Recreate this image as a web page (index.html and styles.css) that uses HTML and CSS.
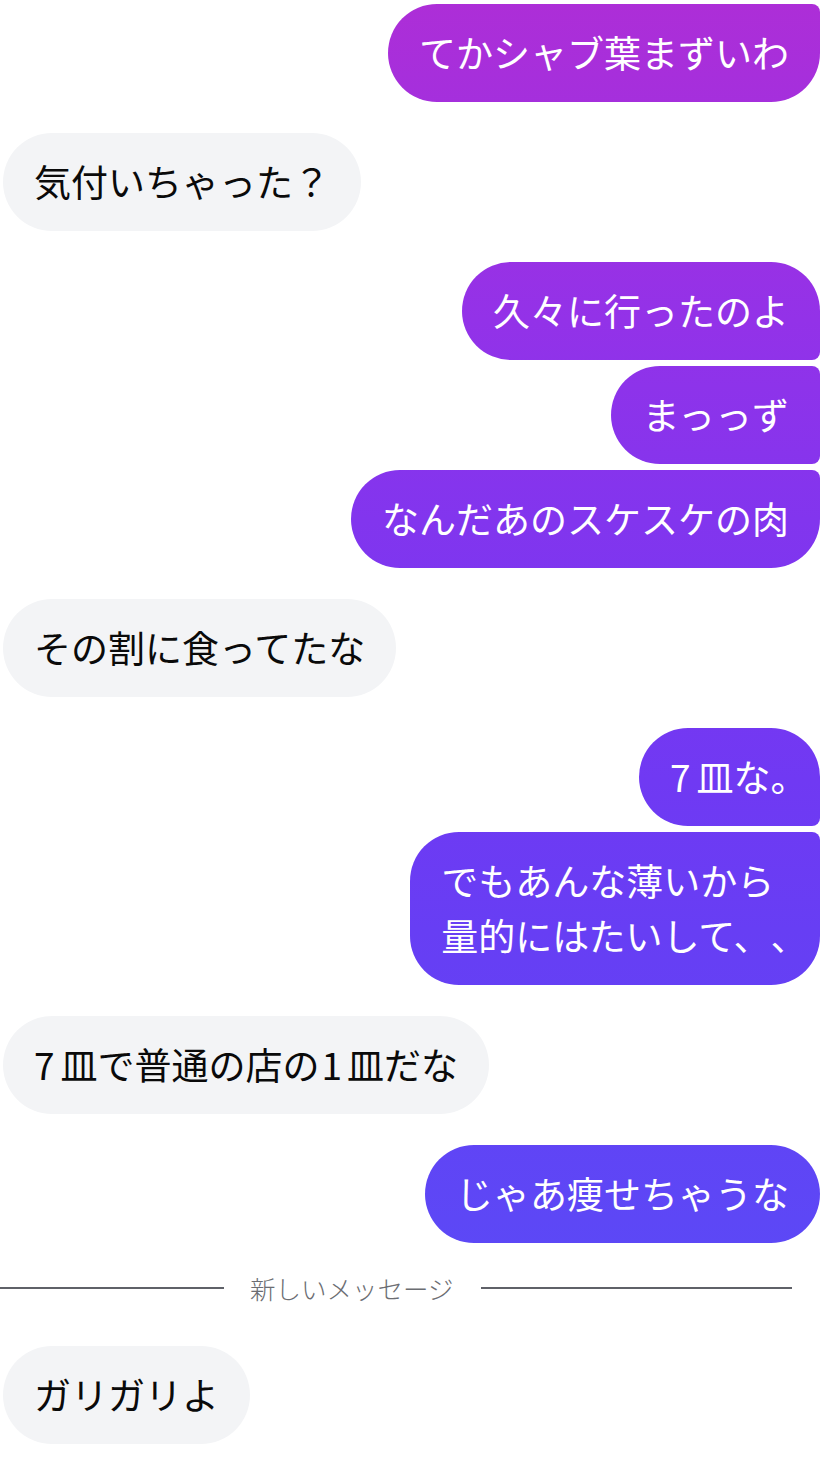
FILE: index.html
```html
<!DOCTYPE html>
<html lang="ja">
<head>
<meta charset="utf-8">
<link rel="stylesheet" href="styles.css">
</head>
<body>
<main class="chat">
  <div class="group out">
    <div class="bubble out mid-top">てかシャブ葉まずいわ</div>
  </div>
  <div class="group in">
    <div class="bubble in">気付いちゃった？</div>
  </div>
  <div class="group out">
    <div class="bubble out first">久々に行ったのよ</div>
    <div class="bubble out middle">まっっず</div>
    <div class="bubble out last">なんだあのスケスケの肉</div>
  </div>
  <div class="group in">
    <div class="bubble in">その割に食ってたな</div>
  </div>
  <div class="group out">
    <div class="bubble out first"><span class="num">7</span>皿な<span class="half">。</span></div>
    <div class="bubble out last">でもあんな薄いから<br>量的にはたいして、<span class="half">、</span></div>
  </div>
  <div class="group in">
    <div class="bubble in"><span class="num">7</span>皿で普通の店の<span class="num mid">1</span>皿だな</div>
  </div>
  <div class="group out">
    <div class="bubble out">じゃあ痩せちゃうな</div>
  </div>
  <div class="divider">
    <span class="line"></span>
    <span class="divider-text">新しいメッセージ</span>
    <span class="line right"></span>
  </div>
  <div class="group in">
    <div class="bubble in">ガリガリよ</div>
  </div>
</main>
</body>
</html>
```

FILE: styles.css
```css
html, body {
  margin: 0;
  padding: 0;
  background: #ffffff;
}

body {
  font-family: "Noto Sans CJK JP", "Noto Sans", sans-serif;
  width: 840px;
  text-spacing-trim: space-all;
}

.chat {
  display: flex;
  flex-direction: column;
  gap: 31px;
  padding: 4px 20px 0 3px;
}

.group {
  display: flex;
  flex-direction: column;
  gap: 6px;
}

.group.out {
  align-items: flex-end;
}

.group.in {
  align-items: flex-start;
}

.bubble {
  font-size: 37px;
  line-height: 55px;
  padding: 21px 31px 22px 31px;
  border-radius: 49px;
  white-space: nowrap;
  text-spacing-trim: space-all;
}

.num {
  margin: 0 6px 0 0;
}

.num.mid {
  margin: 0 5px 0 2px;
}

.half {
  font-feature-settings: "halt" 1;
}

.bubble.in {
  background: #f3f4f6;
  color: #0a0a0a;
}

.bubble.out {
  color: #ffffff;
  background-image: linear-gradient(to bottom, #ad2ed7 0px, #9332e8 320px, #8235ee 520px, #7039f3 780px, #673ef4 930px, #5c48f6 1250px, #5a4af6 1465px);
  background-attachment: fixed;
  background-size: 840px 1465px;
}

.bubble.out.mid-top {
  border-top-right-radius: 8px;
}

.bubble.out.first {
  border-bottom-right-radius: 8px;
}

.bubble.out.middle {
  border-top-right-radius: 8px;
  border-bottom-right-radius: 8px;
}

.bubble.out.last {
  border-top-right-radius: 8px;
}

.divider {
  display: flex;
  align-items: center;
  margin: 0 -20px 13px -3px;
  height: 28px;
}

.line {
  display: block;
  width: 224px;
  height: 2px;
  background: #5f6168;
}

.line.right {
  width: 311px;
}

.divider-text {
  font-size: 25.5px;
  line-height: 28px;
  color: #6b6d72;
  padding: 0 27px 0 26px;
  font-weight: 300;
}
```
